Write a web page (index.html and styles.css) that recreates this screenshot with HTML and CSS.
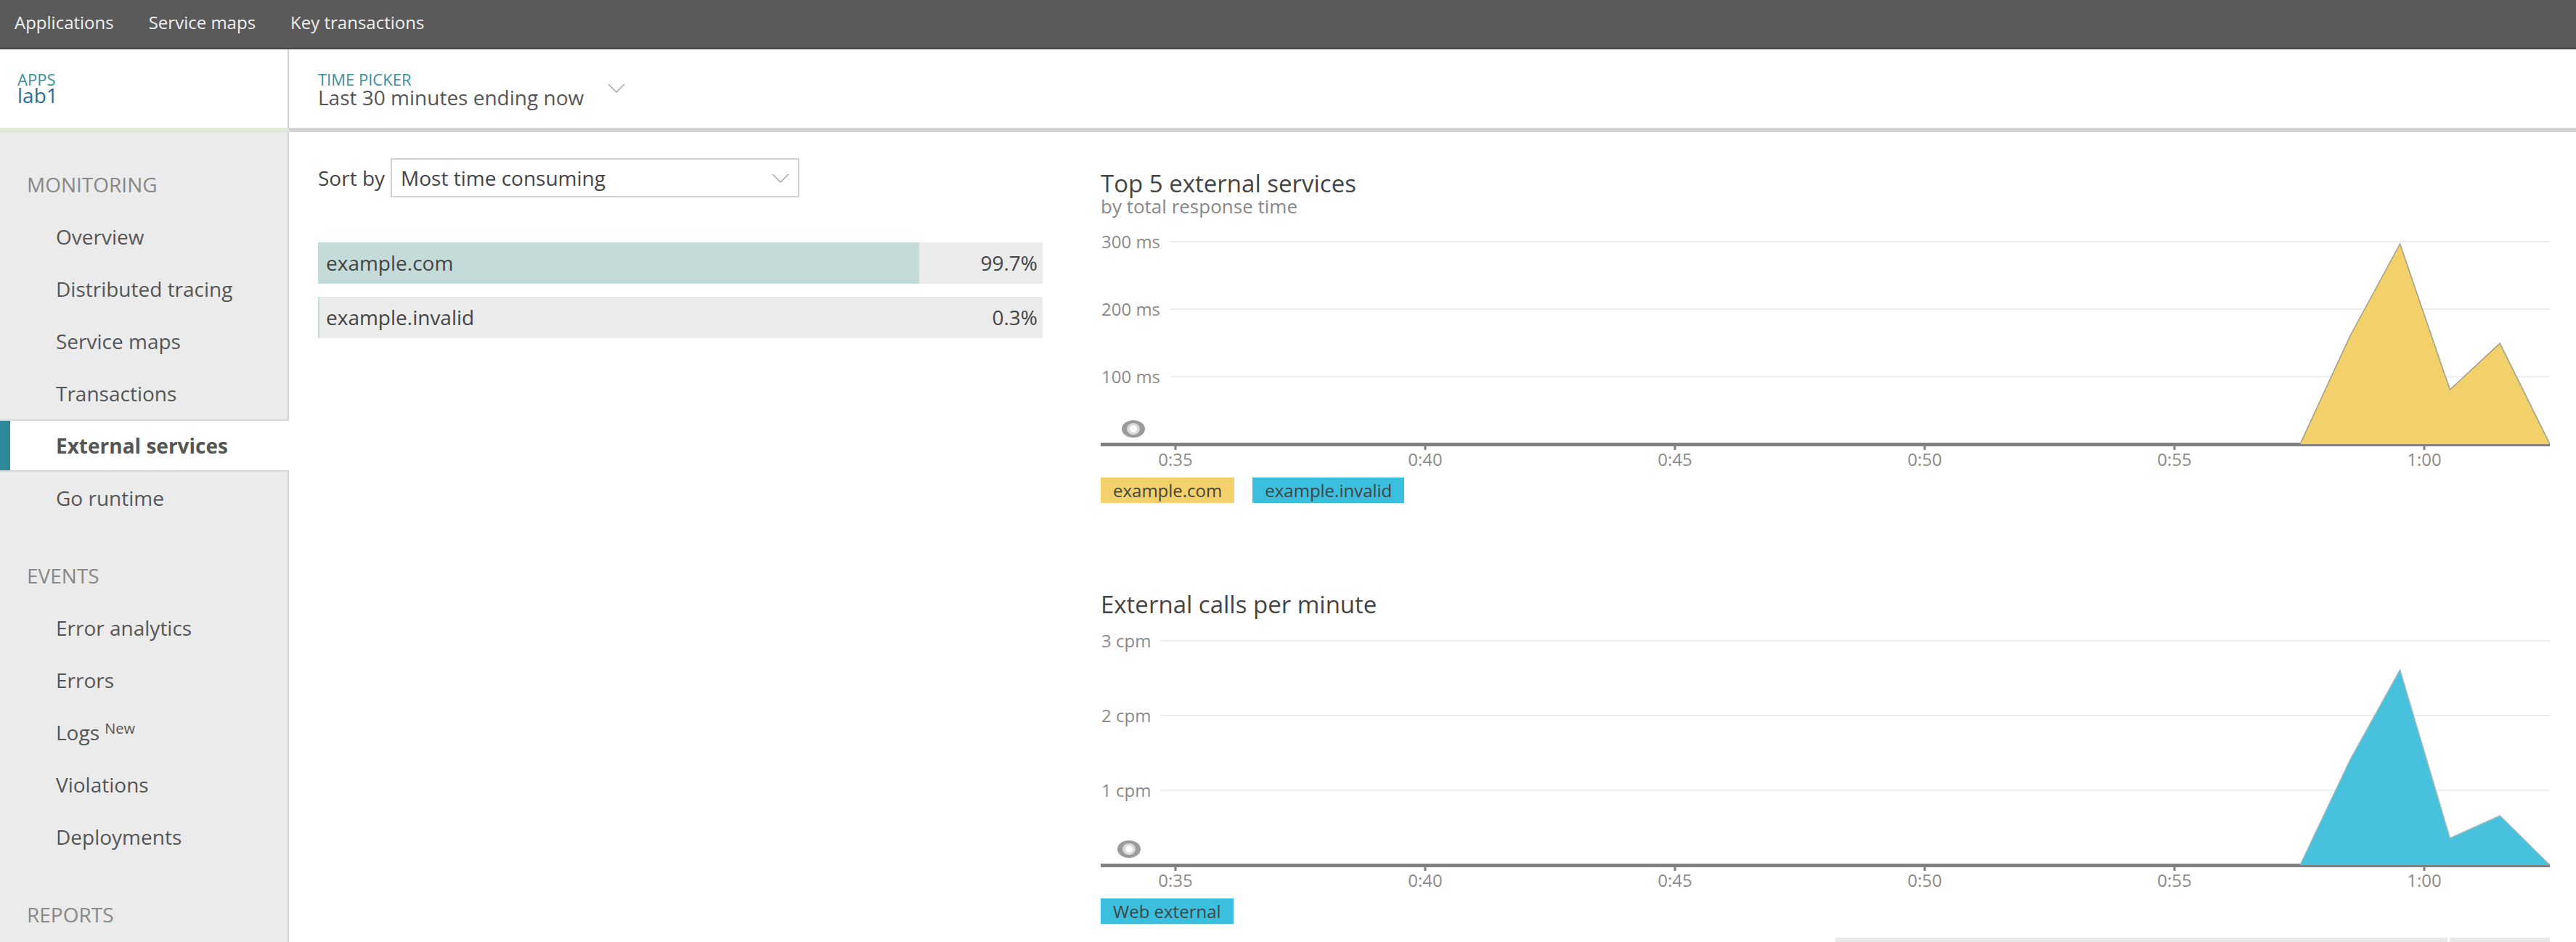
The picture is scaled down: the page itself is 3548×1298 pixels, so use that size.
FILE: index.html
```html
<!DOCTYPE html>
<html lang="en">
<head>
<meta charset="utf-8">
<title>External services - lab1</title>
<link rel="stylesheet" href="styles.css">
</head>
<body>
<div class="topbar">
  <a class="toplink">Applications</a>
  <a class="toplink">Service maps</a>
  <a class="toplink">Key transactions</a>
</div>
<div class="header">
  <div class="apps">
    <div class="label">APPS</div>
    <div class="appname">lab1</div>
  </div>
  <div class="timepicker">
    <div class="tp-text">
      <div class="label">TIME PICKER</div>
      <div class="tp-value">Last 30 minutes ending now</div>
    </div>
    <svg class="chev" width="24" height="13" viewBox="0 0 24 13"><polyline points="1,1 12,12 23,1" fill="none" stroke="#aaaaaa" stroke-width="1.6"/></svg>
  </div>
</div>
<div class="layout">
  <nav class="sidebar">
    <div class="section">
      <div class="section-title">MONITORING</div>
      <a class="item">Overview</a>
      <a class="item">Distributed tracing</a>
      <a class="item">Service maps</a>
      <a class="item">Transactions</a>
      <a class="item active">External services</a>
      <a class="item">Go runtime</a>
    </div>
    <div class="section">
      <div class="section-title">EVENTS</div>
      <a class="item">Error analytics</a>
      <a class="item">Errors</a>
      <a class="item">Logs <sup class="new">New</sup></a>
      <a class="item">Violations</a>
      <a class="item">Deployments</a>
    </div>
    <div class="section">
      <div class="section-title">REPORTS</div>
    </div>
  </nav>
  <main class="content">
    <div class="left">
      <div class="sort">
        <span class="sort-label">Sort by</span>
        <div class="select">
          <span>Most time consuming</span>
          <svg width="24" height="13" viewBox="0 0 24 13"><polyline points="1,1 12,12 23,1" fill="none" stroke="#aaaaaa" stroke-width="1.6"/></svg>
        </div>
      </div>
      <div class="bars">
        <div class="bar-row">
          <div class="track">
            <div class="fill" style="width:99.7%"></div>
            <span class="bar-name">example.com</span>
          </div>
          <div class="pct">99.7%</div>
        </div>
        <div class="bar-row">
          <div class="track">
            <div class="fill" style="width:0.3%"></div>
            <span class="bar-name">example.invalid</span>
          </div>
          <div class="pct">0.3%</div>
        </div>
      </div>
    </div>
    <div class="right">
      <section class="chart-block">
        <h2 class="chart-title">Top 5 external services</h2>
        <div class="chart-sub">by total response time</div>
        <svg class="chart" width="1996" height="350" viewBox="0 0 1996 350">
          <line class="grid" x1="95" y1="33" x2="1996" y2="33"/>
          <line class="grid" x1="95" y1="126" x2="1996" y2="126"/>
          <line class="grid" x1="95" y1="219" x2="1996" y2="219"/>
          <text x="1" y="41.5">300 ms</text>
          <text x="1" y="134.5">200 ms</text>
          <text x="1" y="227.5">100 ms</text>
          <rect class="axis" x="0" y="310" width="1996" height="5"/>
          <rect class="axis" x="101.5" y="315" width="3" height="5"/>
          <rect class="axis" x="445.5" y="315" width="3" height="5"/>
          <rect class="axis" x="789.5" y="315" width="3" height="5"/>
          <rect class="axis" x="1133.5" y="315" width="3" height="5"/>
          <rect class="axis" x="1477.5" y="315" width="3" height="5"/>
          <rect class="axis" x="1821.5" y="315" width="3" height="5"/>
          <polygon points="1652,312 1720.8,163 1789.6,36 1858.4,237 1927.2,173 1996,312" fill="#f2d16b"/>
          <polyline points="1652,312 1720.8,163 1789.6,36 1858.4,237 1927.2,173 1996,312" fill="none" stroke="#a09c88" stroke-width="1.5"/>
          <text class="xl" x="103" y="342">0:35</text>
          <text class="xl" x="447" y="342">0:40</text>
          <text class="xl" x="791" y="342">0:45</text>
          <text class="xl" x="1135" y="342">0:50</text>
          <text class="xl" x="1479" y="342">0:55</text>
          <text class="xl" x="1823" y="342">1:00</text>
          <ellipse cx="45" cy="291" rx="16" ry="12" fill="#9b9b9b"/>
          <ellipse cx="45" cy="291" rx="9" ry="8" fill="#d9d9d9"/>
          <ellipse cx="45" cy="291" rx="5" ry="5" fill="#ffffff"/>
        </svg>
        <div class="legend">
          <span class="lg yellow">example.com</span>
          <span class="lg cyan">example.invalid</span>
        </div>
      </section>
      <section class="chart-block second">
        <h2 class="chart-title">External calls per minute</h2>
        <svg class="chart" width="1996" height="381" viewBox="0 0 1996 381">
          <line class="grid" x1="82" y1="34" x2="1996" y2="34"/>
          <line class="grid" x1="82" y1="137" x2="1996" y2="137"/>
          <line class="grid" x1="82" y1="240" x2="1996" y2="240"/>
          <text x="1" y="42.5">3 cpm</text>
          <text x="1" y="145.5">2 cpm</text>
          <text x="1" y="248.5">1 cpm</text>
          <rect class="axis" x="0" y="341" width="1996" height="5"/>
          <rect class="axis" x="101.5" y="346" width="3" height="5"/>
          <rect class="axis" x="445.5" y="346" width="3" height="5"/>
          <rect class="axis" x="789.5" y="346" width="3" height="5"/>
          <rect class="axis" x="1133.5" y="346" width="3" height="5"/>
          <rect class="axis" x="1477.5" y="346" width="3" height="5"/>
          <rect class="axis" x="1821.5" y="346" width="3" height="5"/>
          <polygon points="1652,343 1720.8,198 1789.6,74 1858.4,306 1927.2,275 1996,343" fill="#47c1dc"/>
          <polyline points="1652,343 1720.8,198 1789.6,74 1858.4,306 1927.2,275 1996,343" fill="none" stroke="#9fb8bf" stroke-width="1.5"/>
          <text class="xl" x="103" y="373">0:35</text>
          <text class="xl" x="447" y="373">0:40</text>
          <text class="xl" x="791" y="373">0:45</text>
          <text class="xl" x="1135" y="373">0:50</text>
          <text class="xl" x="1479" y="373">0:55</text>
          <text class="xl" x="1823" y="373">1:00</text>
          <ellipse cx="39" cy="321" rx="16" ry="12" fill="#9b9b9b"/>
          <ellipse cx="39" cy="321" rx="9" ry="8" fill="#d9d9d9"/>
          <ellipse cx="39" cy="321" rx="5" ry="5" fill="#ffffff"/>
        </svg>
        <div class="legend">
          <span class="lg cyan">Web external</span>
        </div>
      </section>
      <div class="lower">
        <div class="lower-left"></div>
        <div class="table-head">
          <div class="th th-main"></div>
          <div class="th th-side"></div>
        </div>
      </div>
    </div>
  </main>
</div>
</body>
</html>
```

FILE: styles.css
```css
html {
  overflow: hidden;
}
body {
  margin: 0;
  font-family: "Open Sans", "Liberation Sans", sans-serif;
  color: #555555;
  background: #ffffff;
}
a {
  text-decoration: none;
  color: inherit;
}

/* Top navigation */
.topbar {
  height: 66px;
  background: #5a5a5a;
  border-bottom: 2px solid #444444;
  display: flex;
  gap: 48px;
  padding-left: 20px;
}
.toplink {
  font-size: 24px;
  line-height: 62px;
  color: #f0f0f0;
}

/* Header row */
.header {
  display: flex;
  height: 114px;
}
.apps {
  width: 398px;
  box-sizing: border-box;
  padding: 30px 0 0 24px;
  border-bottom: 6px solid #e2ead5;
  box-shadow: inset -2px 0 0 #d2d2d2;
}
.label {
  font-size: 22px;
  line-height: 22px;
  color: #3a8f9c;
}
.appname {
  font-size: 28px;
  line-height: 28px;
  margin-top: -3px;
  color: #2b6d99;
}
.timepicker {
  flex: 1;
  display: flex;
  align-items: flex-start;
  padding: 30px 0 0 40px;
  border-bottom: 6px solid #d3d3d3;
}
.tp-value {
  font-size: 28px;
  line-height: 28px;
  color: #555555;
}
.chev {
  margin: 17px 0 0 33px;
}

/* Layout */
.layout {
  display: flex;
  min-height: calc(100vh - 182px);
}
.sidebar {
  width: 398px;
  flex-shrink: 0;
  box-sizing: border-box;
  background: #ebebeb;
  border-right: 2px solid #d5d5d5;
  padding-top: 1px;
}
.section {
  padding-top: 35px;
  display: flex;
  flex-direction: column;
}
.section-title {
  font-size: 28px;
  line-height: 72px;
  padding-left: 37px;
  color: #888888;
}
.item {
  font-size: 28px;
  line-height: 72px;
  padding-left: 77px;
  color: #555555;
}
.item.active {
  background: #ffffff;
  line-height: 68px;
  border-top: 2px solid #d5d5d5;
  border-bottom: 2px solid #d5d5d5;
  margin-right: -2px;
  box-shadow: inset 14px 0 0 #2e8a9b;
  font-weight: 700;
}
.new {
  font-size: 20px;
  line-height: 1;
  vertical-align: 9px;
}

/* Main content */
.content {
  flex: 1;
  display: grid;
  grid-template-columns: 1fr 2fr;
  column-gap: 80px;
  align-items: start;
  padding: 36px 36px 0 40px;
}
.sort {
  display: flex;
  align-items: center;
  height: 54px;
}
.sort-label {
  font-size: 28px;
  color: #444444;
  margin-right: 8px;
}
.select {
  width: 563px;
  height: 54px;
  box-sizing: border-box;
  border: 2px solid #d0d0d0;
  padding: 0 12px;
  display: flex;
  align-items: center;
  justify-content: space-between;
  font-size: 28px;
  color: #444444;
}
.bars {
  margin-top: 62px;
}
.bar-row {
  display: flex;
  height: 57px;
  margin-bottom: 18px;
  background: #ebebeb;
}
.track {
  flex: 1;
  position: relative;
}
.fill {
  position: absolute;
  left: 0;
  top: 0;
  bottom: 0;
  background: #c4dbd9;
}
.bar-name {
  position: relative;
  padding-left: 11px;
  font-size: 28px;
  line-height: 57px;
  color: #444444;
}
.pct {
  width: 168px;
  box-sizing: border-box;
  text-align: right;
  padding-right: 7px;
  font-size: 28px;
  line-height: 57px;
  color: #444444;
}

/* Charts */
.right {
  padding-top: 19px;
}
.chart-title {
  margin: 0;
  font-size: 33px;
  line-height: 32px;
  font-weight: 400;
  color: #444444;
}
.chart-sub {
  font-size: 26px;
  line-height: 31px;
  color: #888888;
}
.chart {
  display: block;
  width: 100%;
}
.chart text {
  font-family: "Open Sans", "Liberation Sans", sans-serif;
  font-size: 24px;
  fill: #8a8a8a;
}
.chart .xl {
  text-anchor: middle;
}
.grid {
  stroke: #ededed;
  stroke-width: 2;
}
.axis {
  fill: #808080;
}
.legend {
  display: flex;
  gap: 25px;
  margin-top: 8px;
}
.lg {
  height: 35px;
  line-height: 35px;
  padding: 0 17px;
  font-size: 24px;
  color: #444444;
}
.yellow {
  background: #f2d16b;
}
.cyan {
  background: #3bbfdf;
}
.chart-block.second {
  margin-top: 124px;
}
.lower {
  display: grid;
  grid-template-columns: 1fr 1fr;
  column-gap: 28px;
  margin-top: 19px;
}
.table-head {
  display: flex;
  gap: 3px;
}
.th {
  height: 40px;
  background: #e8e8e8;
}
.th-main {
  flex: 1;
}
.th-side {
  width: 138px;
}
```
